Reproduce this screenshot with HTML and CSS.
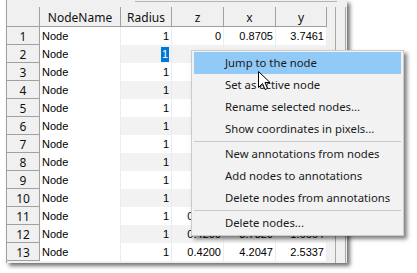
FILE: index.html
```
<!DOCTYPE html>
<html>
<head>
<meta charset="utf-8">
<link rel="stylesheet" href="styles.css">
</head>
<body>
<div class="window">
  <div class="topline"></div>
  <div class="body">
    <div class="grid">
      <div class="hd corner"></div>
      <div class="hd">NodeName</div>
      <div class="hd">Radius</div>
      <div class="hd">z</div>
      <div class="hd">x</div>
      <div class="hd">y</div>

      <div class="rn">1</div><div class="c name">Node</div><div class="c num">1</div><div class="c num">0</div><div class="c num">0.8705</div><div class="c num">3.7461</div>
      <div class="rn">2</div><div class="c name">Node</div><div class="c num alt"><span class="sel">1</span></div><div class="c num alt"></div><div class="c num alt"></div><div class="c num alt"></div>
      <div class="rn">3</div><div class="c name">Node</div><div class="c num">1</div><div class="c num"></div><div class="c num"></div><div class="c num"></div>
      <div class="rn">4</div><div class="c name">Node</div><div class="c num alt">1</div><div class="c num alt"></div><div class="c num alt"></div><div class="c num alt"></div>
      <div class="rn">5</div><div class="c name">Node</div><div class="c num">1</div><div class="c num"></div><div class="c num"></div><div class="c num"></div>
      <div class="rn">6</div><div class="c name">Node</div><div class="c num alt">1</div><div class="c num alt"></div><div class="c num alt"></div><div class="c num alt"></div>
      <div class="rn">7</div><div class="c name">Node</div><div class="c num">1</div><div class="c num"></div><div class="c num"></div><div class="c num"></div>
      <div class="rn">8</div><div class="c name">Node</div><div class="c num alt">1</div><div class="c num alt"></div><div class="c num alt"></div><div class="c num alt"></div>
      <div class="rn">9</div><div class="c name">Node</div><div class="c num">1</div><div class="c num"></div><div class="c num"></div><div class="c num"></div>
      <div class="rn">10</div><div class="c name">Node</div><div class="c num alt">1</div><div class="c num alt"></div><div class="c num alt"></div><div class="c num alt"></div>
      <div class="rn">11</div><div class="c name">Node</div><div class="c num">1</div><div class="c num">0.4200</div><div class="c num"></div><div class="c num"></div>
      <div class="rn">12</div><div class="c name">Node</div><div class="c num alt">1</div><div class="c num alt">0.4200</div><div class="c num alt">3.7820</div><div class="c num alt">1.6664</div>
      <div class="rn">13</div><div class="c name">Node</div><div class="c num">1</div><div class="c num">0.4200</div><div class="c num">4.2047</div><div class="c num">2.5337</div>
    </div>
    <div class="gutter"></div>
    <div class="edge"></div>
  </div>
</div>

<div class="menu">
  <div class="item hover">Jump to the node</div>
  <div class="item">Set as active node</div>
  <div class="item">Rename selected nodes...</div>
  <div class="item">Show coordinates in pixels...</div>
  <div class="sep"></div>
  <div class="item">New annotations from nodes</div>
  <div class="item">Add nodes to annotations</div>
  <div class="item">Delete nodes from annotations</div>
  <div class="sep"></div>
  <div class="item">Delete nodes...</div>
</div>

<svg class="cursor" width="13" height="20" viewBox="0 0 13 20">
  <path d="M0.5 0.5 L0.5 16.5 L4.5 12.5 L7 18.5 L9.5 17.5 L7 11.5 L12 11.5 Z" fill="#fff" stroke="#000" stroke-width="1" stroke-linejoin="miter"/>
</svg>
</body>
</html>
```

FILE: styles.css
```
* { box-sizing: border-box; }
html, body { margin: 0; padding: 0; background: #fff; }
body { width: 417px; height: 273px; overflow: hidden; position: relative; }

.window {
  margin-left: 6px;
  width: 341px;
  height: 263px;
  background: #f0f0f0;
  border-left: 1px solid #a0a0a0;
  box-shadow: 3px 3px 4px rgba(0,0,0,0.55);
  display: flex;
  flex-direction: column;
}
.topline {
  margin-left: 128px;
  margin-right: 10px;
  border-top: 1px solid #b4b4b4;
  margin-top: 1px;
  height: 6px;
}
.body { display: flex; align-items: flex-start; flex: 1; }

.grid {
  display: grid;
  grid-template-columns: 33px 81px 51px 52px 52px 51px;
  grid-template-rows: 20px repeat(13, 18px);
  font-family: "Liberation Sans", Arial, sans-serif;
  font-size: 11px;
  color: #000;
}
.hd {
  background: #f0f0f0;
  border-right: 1px solid #a0a0a0;
  border-bottom: 1px solid #a0a0a0;
  font-family: "Noto Sans", "Open Sans", sans-serif;
  font-size: 12px;
  color: #101010;
  display: flex;
  align-items: center;
  justify-content: center;
  line-height: 1;
  padding-top: 2px;
}
.rn {
  background: #f0f0f0;
  border-right: 1px solid #a0a0a0;
  border-bottom: 1px solid #a0a0a0;
  font-family: "Noto Sans", "Open Sans", sans-serif;
  font-size: 12px;
  color: #101010;
  display: flex;
  align-items: center;
  justify-content: center;
  padding-top: 3px;
  line-height: 1;
}
.c {
  background: #fff;
  border-right: 1px solid #ececec;
  display: flex;
  align-items: center;
  line-height: 1;
  padding-top: 1px;
}
.c.alt { background: #f2f2f2; }
.name { padding-left: 2px; }
.num { justify-content: flex-end; padding-right: 2px; }
.sel {
  background: #0078d7;
  color: #fff;
  padding: 2px 1px 2px 1px;
}

.gutter { width: 9px; height: 100%; border-right: 1px solid #a8a8a8; }
.edge { width: 10px; height: 100%; border-right: 1px solid #a8a8a8; }

.menu {
  position: absolute;
  left: 191px;
  top: 50px;
  width: 213px;
  height: 186px;
  background: #f2f2f2;
  border: 1px solid #cccccc;
  padding: 1px 2px;
  box-shadow: 3px 3px 4px rgba(0,0,0,0.5);
  font-family: "Noto Sans", "Open Sans", sans-serif;
  font-size: 11.3px;
  color: #1a1a1a;
}
.item {
  height: 22px;
  line-height: 22px;
  padding-left: 31px;
  white-space: nowrap;
}
.item.hover { background: #91c9f7; }
.sep {
  height: 3px;
  border-top: 1px solid #c8c8c8;
  margin-top: 1px;
  margin-bottom: -1px;
}
.cursor { position: absolute; left: 258px; top: 71px; }
```
